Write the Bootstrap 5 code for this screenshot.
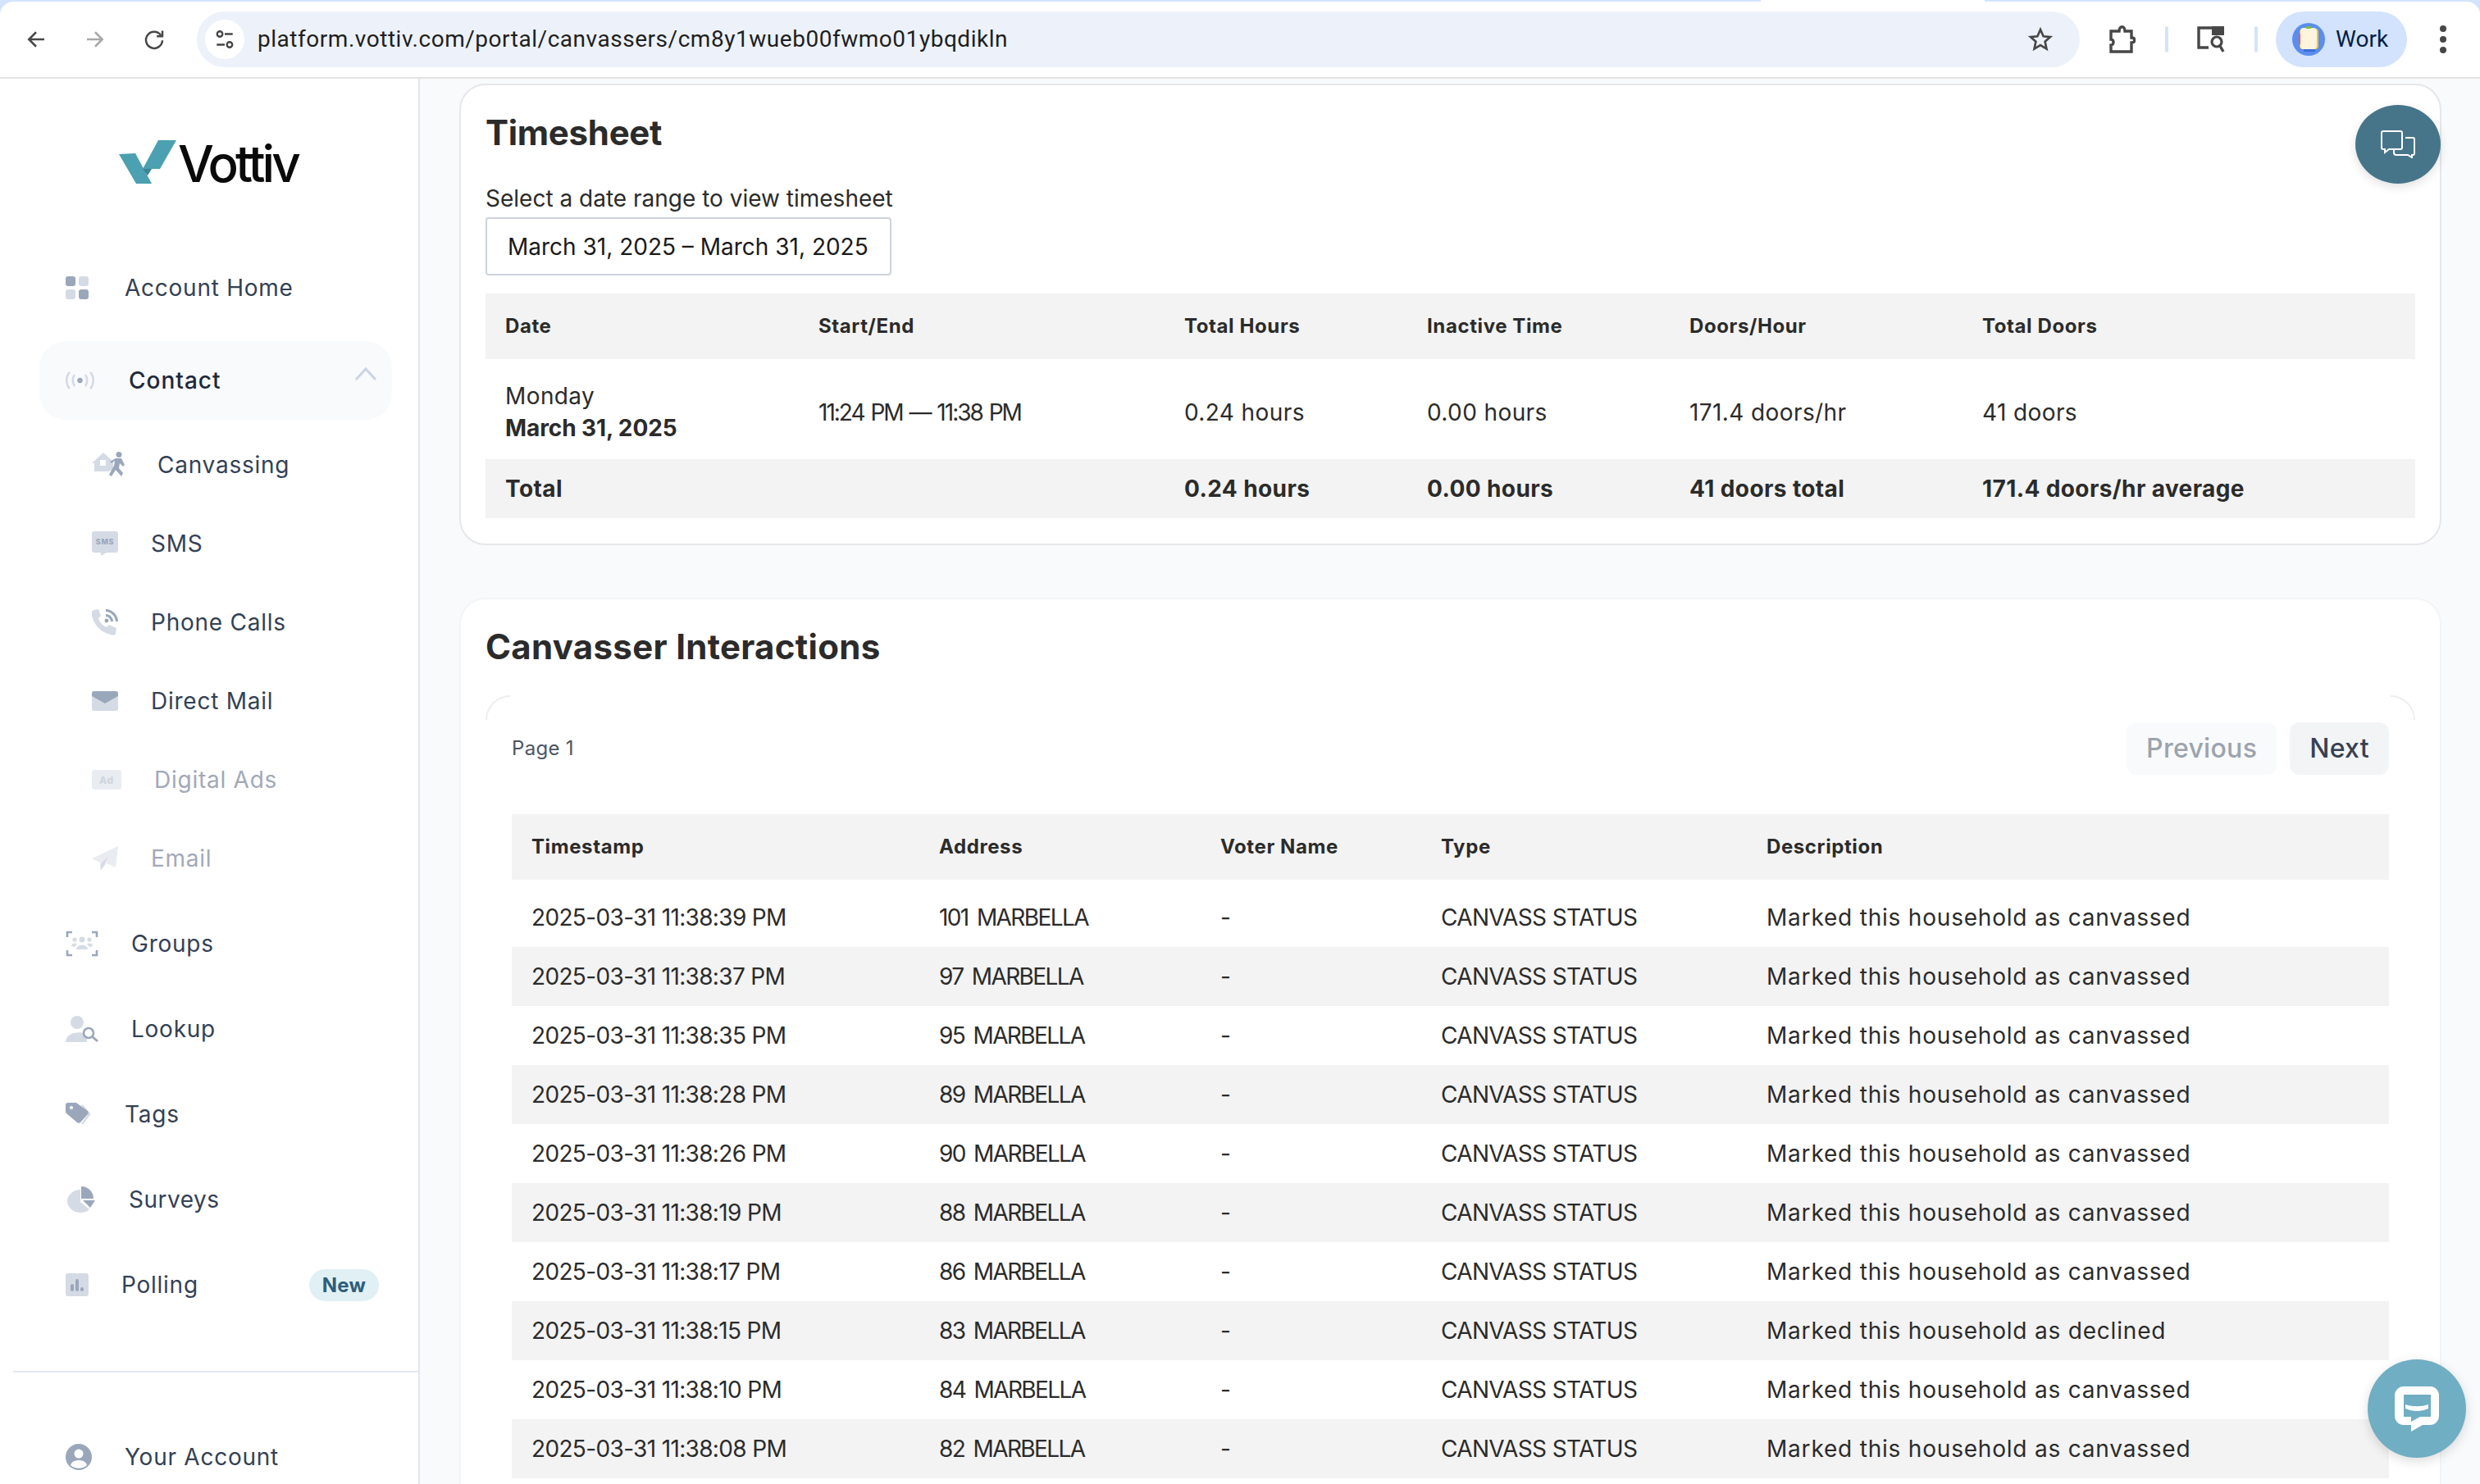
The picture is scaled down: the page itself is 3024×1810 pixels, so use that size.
<!doctype html>
<html lang="en">

<head>
	<meta charset="utf-8">
	<meta name="viewport" content="width=device-width, initial-scale=1">
	<title>Canvasser — Vottiv</title>
	<link href="https://cdn.jsdelivr.net/npm/bootstrap@5.3.5/dist/css/bootstrap.min.css" rel="stylesheet">
	<style>
		html, body { height: 1810px; overflow: hidden; }
		body { background: #f9fafb; font-family: Inter, "Liberation Sans", sans-serif; color: #2b2b2b; font-size: 28px; }

		/* browser chrome */
		.tool-bar { height: 96px; background: #d3e3fd; padding-top: 2px; position: relative; }
		.tool-tab { position: absolute; left: 2147px; top: 0; width: 273px; height: 2px; background: #fff; }
		.tool-row { height: 94px; background: #fff; border-bottom: 2px solid #e3e3e3; border-radius: 16px 16px 0 0; }
		.tool-btn { width: 72px; flex: none; }
		.omni-box { width: 2296px; height: 68px; background: #edf2fa; border-radius: 34px; font-family: Roboto, sans-serif; font-size: 28px; letter-spacing: .53px; color: #1f1f1f; }
		.omni-site { width: 48px; height: 48px; margin: 0 16px 0 10px; background: #fff; border-radius: 50%; }
		.omni-star { margin: 0 32px 0 auto; }
		.tool-sep { width: 4px; height: 32px; background: #d3e3fd; border-radius: 2px; flex: none; }
		.ext-slot { width: 104px; }
		.lens-slot { width: 105px; }
		.profile-pill { width: 160px; height: 68px; margin-left: 22px; background: #d3e3fd; border-radius: 34px; font-family: Roboto, sans-serif; font-size: 28px; color: #041e49; padding-left: 20px; gap: 13px; }
		.profile-face { width: 40px; height: 40px; flex: none; }
		.menu-dots { width: 8px; margin-left: 40px; gap: 5px; }
		.menu-dots span { width: 8px; height: 8px; background: #474747; border-radius: 50%; }

		/* sidebar */
		.side-bar { width: 512px; flex: none; height: 1714px; background: #fff; border-right: 2px solid #e2e8f0; overflow: hidden; }
		.logo-box { height: 203px; flex: none; padding: 74px 0 0 145px; }
		.logo-word { font-size: 62px; font-weight: 500; letter-spacing: -4px; color: #0a0a0a; line-height: 60px; }
		.side-item { height: 104px; flex: none; padding-left: 80px; gap: 40px; color: #334155; letter-spacing: .75px; }
		.side-sub { height: 96px; padding-left: 112px; }
		.side-open { height: 96px; margin: 13px 32px 7px 48px; padding: 0 18px 0 31px; background: #f8fafc; border-radius: 32px; color: #1e293b; font-weight: 500; gap: 41px; letter-spacing: 1px; }
		.side-off { color: #a1a9b8; }
		.side-survey { padding-left: 82px; gap: 41px; letter-spacing: .5px; }
		.side-new { margin: 0 48px 0 auto; padding: 0 16px; height: 39px; line-height: 39px; border-radius: 20px; background: #e0f0f5; color: #2f5d7c; font-size: 24px; font-weight: 700; letter-spacing: .2px; }
		.side-rule { height: 2px; background: #e2e8f0; margin: 53px 0 51px 16px; flex: none; }
		.ic-a { fill: #d5dbe5; }
		.ic-b { fill: #9aa7bb; }

		/* main */
		.main-area { padding: 6px 47px 0 48px; min-width: 0; height: 1714px; overflow: hidden; }
		.sheet-card { background: #fff; border: 2px solid #e5e7eb; border-radius: 32px; padding: 28px 30px 30px; height: 563px; }
		.sheet-plain { border-color: #f3f4f6; margin-top: 64px; height: 1200px; }
		.sheet-title { font-size: 42px; font-weight: 700; line-height: 60px; margin: 0 0 34px; color: #2b2b2b; letter-spacing: -.3px; }
		.sheet-plain .sheet-title { margin-bottom: 29px; letter-spacing: .3px; }
		.sheet-label { line-height: 32px; margin-bottom: 7px; }
		.range-box { width: 495px; height: 71px; border: 2px solid #ccd3dd; border-radius: 4px; padding-left: 25px; color: #1a1a1a; margin-bottom: 22px; }
		.data-grid { table-layout: fixed; margin: 0; --bs-table-bg: transparent; --bs-table-color: #2b2b2b; width: 100%; letter-spacing: .4px; }
		.data-grid > * > tr > * { border: 0; padding: 0 24px; vertical-align: middle; }
		.data-grid thead th { height: 80px; background: #f3f3f3; font-size: 24px; font-weight: 700; letter-spacing: .6px; }
		.data-grid tfoot td { height: 72px; background: #f3f3f3; font-weight: 700; letter-spacing: .4px; }
		.data-grid > tbody > .day-row > td { height: 122px; padding-top: 8px; }
		.day-row b { font-weight: 700; letter-spacing: -.1px; }
		.day-lines { line-height: 39px; }
		.data-grid .clock-cell { letter-spacing: -2px; word-spacing: 2px; }
		.data-grid .stamp-cell, .data-grid .kind-cell { letter-spacing: -.65px; }
		.data-grid .addr-cell { letter-spacing: -1.6px; word-spacing: 4px; }
		.data-grid .note-cell { letter-spacing: .8px; }
		.inter-grid tbody td { height: 72px; }
		.data-grid.inter-grid > tbody > tr:first-child > td { height: 82px; padding-top: 10px; }
		.inter-grid tbody tr:nth-child(even) td { background: #f3f3f3; }

		.c1 { width: 382px; } .c2 { width: 446px; } .c3 { width: 296px; } .c4 { width: 320px; } .c5 { width: 357px; }
		.k1 { width: 497px; } .k2 { width: 343px; } .k3 { width: 269px; } .k4 { width: 397px; }

		.inner-box { position: relative; padding: 33px 32px 0; }
		.arc-left, .arc-right { position: absolute; top: 0; width: 30px; height: 30px; border-top: 2px solid #eceef1; }
		.arc-left { left: 0; border-left: 2px solid #eceef1; border-top-left-radius: 30px; }
		.arc-right { right: 0; border-right: 2px solid #eceef1; border-top-right-radius: 30px; }
		.page-bar { height: 64px; margin-bottom: 48px; gap: 16px; }
		.page-no { font-size: 24px; color: #4b5563; margin-right: auto; letter-spacing: .3px; }
		.page-btn { height: 64px; padding: 0 24px; border: 0; border-radius: 12px; font-size: 32px; font-weight: 500; letter-spacing: .3px; background: #f3f4f6; color: #374151; }
		.page-btn:disabled { background: #f9fafb; color: #9ca3af; opacity: 1; }

		/* floating chat buttons */
		.chat-team { position: absolute; left: 2872px; top: 128px; width: 104px; height: 96px; border-radius: 50%; background: #46758a; box-shadow: 0 4px 12px rgba(0, 0, 0, .12); }
		.chat-help { position: absolute; left: 2887px; top: 1658px; width: 120px; height: 120px; border-radius: 50%; background: #70aec3; box-shadow: 0 4px 14px rgba(0, 0, 0, .14); }
	</style>
</head>

<body>

	<div class="tool-bar">
		<span class="tool-tab"></span>
		<div class="tool-row d-flex align-items-center">
			<div class="tool-btn ms-2 d-flex justify-content-center">
				<svg width="30" height="30" viewBox="0 0 24 24" fill="none" stroke="#474747" stroke-width="2"><path d="M20 12H5M12 5l-7 7 7 7"/></svg>
			</div>
			<div class="tool-btn d-flex justify-content-center">
				<svg width="30" height="30" viewBox="0 0 24 24" fill="none" stroke="#a8a8a8" stroke-width="2"><path d="M4 12h15M12 5l7 7-7 7"/></svg>
			</div>
			<div class="tool-btn d-flex justify-content-center">
				<svg width="30" height="30" viewBox="0 0 24 24" fill="none" stroke="#474747" stroke-width="2"><path d="M18.5 8A8 8 0 1 0 20 13"/><path d="M20 3.5V9h-5.5" /></svg>
			</div>
			<div class="omni-box d-flex align-items-center ms-3">
				<span class="omni-site d-flex align-items-center justify-content-center">
					<svg width="26" height="26" viewBox="0 0 24 24" fill="none" stroke="#474747" stroke-width="2.2"><circle cx="6.5" cy="6" r="3"/><path d="M12 6h9M3 18h9"/><circle cx="17.5" cy="18" r="3"/></svg>
				</span>
				<span>platform.vottiv.com/portal/canvassers/cm8y1wueb00fwmo01ybqdikln</span>
				<svg class="omni-star" width="32" height="32" viewBox="0 0 24 24" fill="none" stroke="#474747" stroke-width="2"><path d="M12 3l2.7 6.2 6.3.6-4.8 4.3 1.4 6.6L12 17.3l-5.6 3.4 1.4-6.6L3 9.8l6.3-.6z"/></svg>
			</div>
			<div class="ext-slot d-flex justify-content-center">
				<svg width="32" height="34" viewBox="0 0 32 34" fill="none" stroke="#474747" stroke-width="3.4"><path d="M2 7h10c0-7 7-7 7 0h8v8c5 0 5 6 0 6v11H2v-8c4 0 4-7 0-7z"/></svg>
			</div>
			<span class="tool-sep"></span>
			<div class="lens-slot d-flex justify-content-center">
				<svg width="36" height="32" viewBox="0 0 36 32" fill="none"><path d="M14 26H2V2h18" stroke="#474747" stroke-width="3.4"/><path d="M18 0h15v11H18z" fill="#474747"/><circle cx="24" cy="19" r="6" stroke="#474747" stroke-width="3.2"/><path d="M28 24l4 7" stroke="#474747" stroke-width="3.4"/></svg>
			</div>
			<span class="tool-sep"></span>
			<div class="profile-pill d-flex align-items-center">
				<svg class="profile-face" viewBox="0 0 40 40"><circle cx="20" cy="20" r="20" fill="#5b8def"/><rect x="14" y="30" width="14" height="5" fill="#3c6ed8"/><rect x="9" y="7" width="23" height="25" rx="4" fill="#fbc02d"/><rect x="8" y="13" width="4" height="13" fill="#e5604d"/><rect x="10" y="6" width="20" height="26" rx="4" fill="#fff5df"/><rect x="17" y="4" width="6" height="3" fill="#7cc043"/></svg>
				<span>Work</span>
			</div>
			<div class="menu-dots d-flex flex-column align-items-center">
				<span></span><span></span><span></span>
			</div>
		</div>
	</div>

	<div class="d-flex position-relative">
		<aside class="side-bar d-flex flex-column">
			<div class="logo-box d-flex align-items-start">
				<svg width="72" height="56" viewBox="0 0 72 56"><path d="M0 18l20-1 20 37H21z" fill="#4ba0b1"/><path d="M48 1h22L50 36H29z" fill="#4ba0b1"/><path d="M29 36h11l-5 8z" fill="#3a8597"/></svg>
				<span class="logo-word">Vottiv</span>
			</div>

			<div class="side-item d-flex align-items-center">
				<svg width="28" height="28" viewBox="0 0 28 28"><rect width="12" height="12" rx="3" class="ic-b"/><rect x="16" width="12" height="12" rx="3" class="ic-a"/><rect y="16" width="12" height="12" rx="3" class="ic-a"/><rect x="16" y="16" width="12" height="12" rx="3" class="ic-b"/></svg>
				<span class="ms-1">Account Home</span>
			</div>

			<div class="side-item side-open d-flex align-items-center">
				<svg width="37" height="24" viewBox="0 0 37 24" fill="none" stroke="#d5dbe5" stroke-width="2.6"><path d="M6 2C1 7 1 17 6 22M12 5C9 9 9 15 12 19M31 2c5 5 5 15 0 20M25 5c3 4 3 10 0 14"/><circle cx="18.5" cy="12" r="3.2" fill="#9aa7bb" stroke="none"/></svg>
				<span>Contact</span>
				<svg class="ms-auto mb-3" width="28" height="18" viewBox="0 0 28 18" fill="none" stroke="#cbd5e1" stroke-width="3"><path d="M2 16L14 3l12 13"/></svg>
			</div>

			<div class="side-item side-sub d-flex align-items-center">
				<svg width="40" height="32" viewBox="0 0 40 32"><path d="M0 14L14 1l12 11v10L20 24H3v-10z" class="ic-a"/><rect x="10" y="10" width="7" height="7" fill="#fff"/><circle cx="33" cy="3.5" r="3.5" class="ic-b"/><path d="M29 8h7l4 8-2 2-4-4-1 6 5 6-2 4-7-8-5 8-3-2 6-11 1-6-4 3-2-2z" class="ic-b"/></svg>
				<span>Canvassing</span>
			</div>
			<div class="side-item side-sub d-flex align-items-center">
				<svg width="32" height="30" viewBox="0 0 32 30"><path d="M3 0h26a3 3 0 0 1 3 3v20a3 3 0 0 1-3 3H18l-7 4v-4H3a3 3 0 0 1-3-3V3a3 3 0 0 1 3-3z" class="ic-a"/><text x="16" y="15.5" text-anchor="middle" font-size="9" font-weight="800" fill="#9aa7bb" font-family="Inter, sans-serif">SMS</text></svg>
				<span>SMS</span>
			</div>
			<div class="side-item side-sub d-flex align-items-center">
				<svg width="32" height="32" viewBox="0 0 32 32"><path d="M2 1l6-1 3 8-3 3c1 5 5 9 10 11l3-3 9 4-1 7c-1 2-4 2-6 1C13 29 3 21 0 8c-1-3 0-6 2-7z" class="ic-a"/><path d="M17 0c8 0 15 7 15 15h-3C29 9 23 3 17 3zM17 6c5 0 9 4 9 9h-3c0-3-3-6-6-6z" class="ic-b"/><circle cx="18" cy="14" r="2.4" class="ic-b"/></svg>
				<span>Phone Calls</span>
			</div>
			<div class="side-item side-sub d-flex align-items-center">
				<svg width="32" height="24" viewBox="0 0 32 24"><path d="M0 3a3 3 0 0 1 3-3h26a3 3 0 0 1 3 3v18a3 3 0 0 1-3 3H3a3 3 0 0 1-3-3z" class="ic-a"/><path d="M0 3a3 3 0 0 1 3-3h26a3 3 0 0 1 3 3v3l-16 9L0 6z" class="ic-b"/></svg>
				<span>Direct Mail</span>
			</div>
			<div class="side-item side-sub side-off d-flex align-items-center">
				<svg width="36" height="24" viewBox="0 0 36 24"><rect width="36" height="24" rx="3" fill="#e9ecf1"/><text x="18" y="17" text-anchor="middle" font-size="12" font-weight="800" fill="#d0d6df" font-family="Inter, sans-serif">Ad</text></svg>
				<span>Digital Ads</span>
			</div>
			<div class="side-item side-sub side-off d-flex align-items-center">
				<svg width="32" height="30" viewBox="0 0 32 30"><path d="M32 0L0 15l10 5L32 0l-3 26-11-5-8 9v-10z" fill="#e9ecf1"/><path d="M20 12L11 22v7l3-4z" fill="#d5dbe5"/></svg>
				<span>Email</span>
			</div>

			<div class="side-item d-flex align-items-center mt-1">
				<svg width="40" height="32" viewBox="0 0 40 32"><path d="M8 2H2v6M32 2h6v6M8 30H2v-6M32 30h6v-6" fill="none" stroke="#9aa7bb" stroke-width="2.6"/><circle cx="20" cy="11" r="3.4" class="ic-a"/><circle cx="11" cy="11" r="2.6" class="ic-a"/><circle cx="29" cy="11" r="2.6" class="ic-a"/><path d="M13 23c0-7 14-7 14 0zM7 19c0-4 5-4 7-3l-3 4zM33 19c0-4-5-4-7-3l3 4z" class="ic-a"/></svg>
				<span>Groups</span>
			</div>
			<div class="side-item d-flex align-items-center">
				<svg width="40" height="32" viewBox="0 0 40 32"><circle cx="14" cy="8" r="8" class="ic-a"/><path d="M0 32c0-14 24-14 26-8v8z" class="ic-a"/><circle cx="28" cy="21" r="6" fill="#fff" stroke="#9aa7bb" stroke-width="2.6"/><path d="M32 25l7 6" stroke="#9aa7bb" stroke-width="2.8"/></svg>
				<span>Lookup</span>
			</div>
			<div class="side-item d-flex align-items-center">
				<svg width="32" height="28" viewBox="0 0 32 28"><path d="M20 3l9 11-9 12" fill="none" stroke="#d5dbe5" stroke-width="2.4"/><path d="M0 3a3 3 0 0 1 3-3h10l14 10a3 3 0 0 1 0 4L18 24c-1 1-3 1-4 0L1 13c-1-1-1-2-1-3z" class="ic-b"/><circle cx="7" cy="6" r="2" fill="#fff"/></svg>
				<span>Tags</span>
			</div>
			<div class="side-item side-survey d-flex align-items-center">
				<svg width="34" height="32" viewBox="0 0 34 32"><path d="M16 4v15l11 9c-3 3-7 4-11 4C7 32 0 25 0 18S7 4 16 4z" class="ic-a"/><path d="M17 0c9 0 15 7 15 15H17z" class="ic-b"/><path d="M19 17h15l-6 9z" class="ic-b"/></svg>
				<span>Surveys</span>
			</div>
			<div class="side-item d-flex align-items-center">
				<svg width="28" height="28" viewBox="0 0 28 28"><rect width="28" height="28" rx="3" class="ic-a"/><rect x="6" y="13" width="4" height="9" rx="2" class="ic-b"/><rect x="12" y="7" width="4" height="15" rx="2" class="ic-b"/><rect x="18" y="17" width="4" height="5" rx="2" class="ic-b"/></svg>
				<span>Polling</span>
				<span class="side-new">New</span>
			</div>

			<div class="side-rule"></div>

			<div class="side-item d-flex align-items-center">
				<svg width="32" height="32" viewBox="0 0 32 32"><circle cx="16" cy="16" r="16" class="ic-b"/><circle cx="16" cy="12" r="5.5" fill="#fff"/><path d="M6 26c2-8 18-8 20 0-5 5-15 5-20 0z" fill="#fff"/></svg>
				<span>Your Account</span>
			</div>
		</aside>

		<main class="main-area flex-grow-1">
			<section class="sheet-card">
				<h2 class="sheet-title">Timesheet</h2>
				<div class="sheet-label">Select a date range to view timesheet</div>
				<div class="range-box d-flex align-items-center">March 31, 2025 – March 31, 2025</div>
				<table class="table data-grid">
					<colgroup><col class="c1"><col class="c2"><col class="c3"><col class="c4"><col class="c5"><col></colgroup>
					<thead>
						<tr><th>Date</th><th>Start/End</th><th>Total Hours</th><th>Inactive Time</th><th>Doors/Hour</th><th>Total Doors</th></tr>
					</thead>
					<tbody>
						<tr class="day-row">
							<td><div class="day-lines">Monday<br><b>March 31, 2025</b></div></td>
							<td class="clock-cell">11:24 PM — 11:38 PM</td>
							<td>0.24 hours</td>
							<td>0.00 hours</td>
							<td>171.4 doors/hr</td>
							<td>41 doors</td>
						</tr>
					</tbody>
					<tfoot>
						<tr><td>Total</td><td></td><td>0.24 hours</td><td>0.00 hours</td><td>41 doors total</td><td>171.4 doors/hr average</td></tr>
					</tfoot>
				</table>
			</section>

			<section class="sheet-card sheet-plain">
				<h2 class="sheet-title">Canvasser Interactions</h2>
				<div class="inner-box">
					<span class="arc-left"></span><span class="arc-right"></span>
					<div class="page-bar d-flex align-items-center">
						<span class="page-no">Page 1</span>
						<button class="page-btn" disabled>Previous</button>
						<button class="page-btn">Next</button>
					</div>
					<table class="table data-grid inter-grid">
						<colgroup><col class="k1"><col class="k2"><col class="k3"><col class="k4"><col></colgroup>
						<thead>
							<tr><th>Timestamp</th><th>Address</th><th>Voter Name</th><th>Type</th><th>Description</th></tr>
						</thead>
						<tbody>
							<tr><td class="stamp-cell">2025-03-31 11:38:39 PM</td><td class="addr-cell">101 MARBELLA</td><td>-</td><td class="kind-cell">CANVASS STATUS</td><td class="note-cell">Marked this household as canvassed</td></tr>
							<tr><td class="stamp-cell">2025-03-31 11:38:37 PM</td><td class="addr-cell">97 MARBELLA</td><td>-</td><td class="kind-cell">CANVASS STATUS</td><td class="note-cell">Marked this household as canvassed</td></tr>
							<tr><td class="stamp-cell">2025-03-31 11:38:35 PM</td><td class="addr-cell">95 MARBELLA</td><td>-</td><td class="kind-cell">CANVASS STATUS</td><td class="note-cell">Marked this household as canvassed</td></tr>
							<tr><td class="stamp-cell">2025-03-31 11:38:28 PM</td><td class="addr-cell">89 MARBELLA</td><td>-</td><td class="kind-cell">CANVASS STATUS</td><td class="note-cell">Marked this household as canvassed</td></tr>
							<tr><td class="stamp-cell">2025-03-31 11:38:26 PM</td><td class="addr-cell">90 MARBELLA</td><td>-</td><td class="kind-cell">CANVASS STATUS</td><td class="note-cell">Marked this household as canvassed</td></tr>
							<tr><td class="stamp-cell">2025-03-31 11:38:19 PM</td><td class="addr-cell">88 MARBELLA</td><td>-</td><td class="kind-cell">CANVASS STATUS</td><td class="note-cell">Marked this household as canvassed</td></tr>
							<tr><td class="stamp-cell">2025-03-31 11:38:17 PM</td><td class="addr-cell">86 MARBELLA</td><td>-</td><td class="kind-cell">CANVASS STATUS</td><td class="note-cell">Marked this household as canvassed</td></tr>
							<tr><td class="stamp-cell">2025-03-31 11:38:15 PM</td><td class="addr-cell">83 MARBELLA</td><td>-</td><td class="kind-cell">CANVASS STATUS</td><td class="note-cell">Marked this household as declined</td></tr>
							<tr><td class="stamp-cell">2025-03-31 11:38:10 PM</td><td class="addr-cell">84 MARBELLA</td><td>-</td><td class="kind-cell">CANVASS STATUS</td><td class="note-cell">Marked this household as canvassed</td></tr>
							<tr><td class="stamp-cell">2025-03-31 11:38:08 PM</td><td class="addr-cell">82 MARBELLA</td><td>-</td><td class="kind-cell">CANVASS STATUS</td><td class="note-cell">Marked this household as canvassed</td></tr>
						</tbody>
					</table>
				</div>
			</section>
		</main>
	</div>

	<div class="chat-team d-flex align-items-center justify-content-center">
		<svg width="42" height="34" viewBox="0 0 42 34" fill="none" stroke="#fff" stroke-width="2"><path d="M3 1h21a2 2 0 0 1 2 2v18a2 2 0 0 1-2 2H10l-5 4v-4H3a2 2 0 0 1-2-2V3a2 2 0 0 1 2-2z"/><path d="M30 9h9a2 2 0 0 1 2 2v17a2 2 0 0 1-2 2h-1v3l-5-3H19a3 3 0 0 1-3-3v-3"/></svg>
	</div>
	<div class="chat-help d-flex align-items-center justify-content-center">
		<svg width="56" height="56" viewBox="0 0 56 56"><path fill-rule="evenodd" d="M12 1h32a11 11 0 0 1 11 11v25a11 11 0 0 1-11 11h-9L21 56v-8h-9A11 11 0 0 1 1 37V12A11 11 0 0 1 12 1zm0 10v27h9v6l11-6h13V11z" fill="#fff"/><path d="M14 23c9 3 19 3 28 0v5c-9 4-19 4-28 0z" fill="#fff"/></svg>
	</div>

	<script src="https://cdn.jsdelivr.net/npm/bootstrap@5.3.5/dist/js/bootstrap.bundle.min.js"></script>
</body>

</html>
